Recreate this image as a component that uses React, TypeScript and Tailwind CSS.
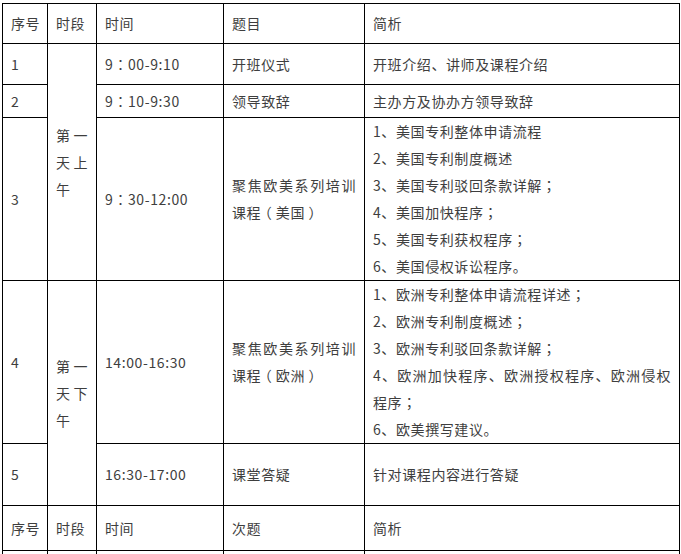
const cell = "border border-black pl-2 pr-2 align-middle text-justify";
const first = "border border-black pl-2 pr-1 align-middle text-justify";

// centred full-width punctuation, as in the source font
function T({ s }: { s: string }) {
  const parts = s.split(/([：；（）])/);
  return (
    <>
      {parts.map((p, i) => {
        if (p === "：" || p === "；")
          return (
            <span key={i} className="font-['Noto_Sans_CJK_TC',sans-serif]">
              {p}
            </span>
          );
        if (p === "（" || p === "）")
          return (
            <span key={i} className="px-[3.5px] [font-feature-settings:'halt']">
              {p}
            </span>
          );
        return p;
      })}
    </>
  );
}

function Lines({ items }: { items: string[] }) {
  return (
    <>
      {items.map((t) => (
        <p key={t}>
          <T s={t} />
        </p>
      ))}
    </>
  );
}

export default function App() {
  return (
    <div className="h-[554px] w-[681px] overflow-hidden bg-white pl-[2px] pt-[3px] font-['Noto_Sans_CJK_SC',sans-serif] text-[14px] leading-[27px] tracking-[0.6px] text-[#3e3e3e] [text-spacing-trim:space-all]">
      <table className="w-[677px] table-fixed border-collapse">
        <colgroup>
          <col className="w-[45px]" />
          <col className="w-[49px]" />
          <col className="w-[127px]" />
          <col className="w-[141px]" />
          <col className="w-[315px]" />
        </colgroup>
        <tbody>
          <tr className="h-[40px]">
            <td className={first}>序号</td>
            <td className={cell}>时段</td>
            <td className={cell}>时间</td>
            <td className={cell}>题目</td>
            <td className={cell}>简析</td>
          </tr>
          <tr className="h-[41px]">
            <td className={first}>1</td>
            <td className={cell} rowSpan={3}>第一天上午</td>
            <td className={cell}><T s="9：00-9:10" /></td>
            <td className={cell}>开班仪式</td>
            <td className={cell}>开班介绍、讲师及课程介绍</td>
          </tr>
          <tr className="h-[33px]">
            <td className={first}>2</td>
            <td className={cell}><T s="9：10-9:30" /></td>
            <td className={cell}>领导致辞</td>
            <td className={cell}>主办方及协办方领导致辞</td>
          </tr>
          <tr className="h-[163px]">
            <td className={first}>3</td>
            <td className={cell}><T s="9：30-12:00" /></td>
            <td className={cell}><T s="聚焦欧美系列培训课程（美国）" /></td>
            <td className={cell}>
              <Lines
                items={[
                  "1、美国专利整体申请流程",
                  "2、美国专利制度概述",
                  "3、美国专利驳回条款详解；",
                  "4、美国加快程序；",
                  "5、美国专利获权程序；",
                  "6、美国侵权诉讼程序。",
                ]}
              />
            </td>
          </tr>
          <tr className="h-[163px]">
            <td className={first}>4</td>
            <td className={cell} rowSpan={2}>第一天下午</td>
            <td className={cell}>14:00-16:30</td>
            <td className={cell}><T s="聚焦欧美系列培训课程（欧洲）" /></td>
            <td className={cell}>
              <Lines
                items={[
                  "1、欧洲专利整体申请流程详述；",
                  "2、欧洲专利制度概述；",
                  "3、欧洲专利驳回条款详解；",
                  "4、欧洲加快程序、欧洲授权程序、欧洲侵权程序；",
                  "6、欧美撰写建议。",
                ]}
              />
            </td>
          </tr>
          <tr className="h-[62px]">
            <td className={first}>5</td>
            <td className={cell}>16:30-17:00</td>
            <td className={cell}>课堂答疑</td>
            <td className={cell}>针对课程内容进行答疑</td>
          </tr>
          <tr className="h-[45px]">
            <td className={first}>序号</td>
            <td className={cell}>时段</td>
            <td className={cell}>时间</td>
            <td className={cell}>次题</td>
            <td className={cell}>简析</td>
          </tr>
          <tr className="h-[40px]">
            <td className={first}></td>
            <td className={cell}></td>
            <td className={cell}></td>
            <td className={cell}></td>
            <td className={cell}></td>
          </tr>
        </tbody>
      </table>
    </div>
  );
}
